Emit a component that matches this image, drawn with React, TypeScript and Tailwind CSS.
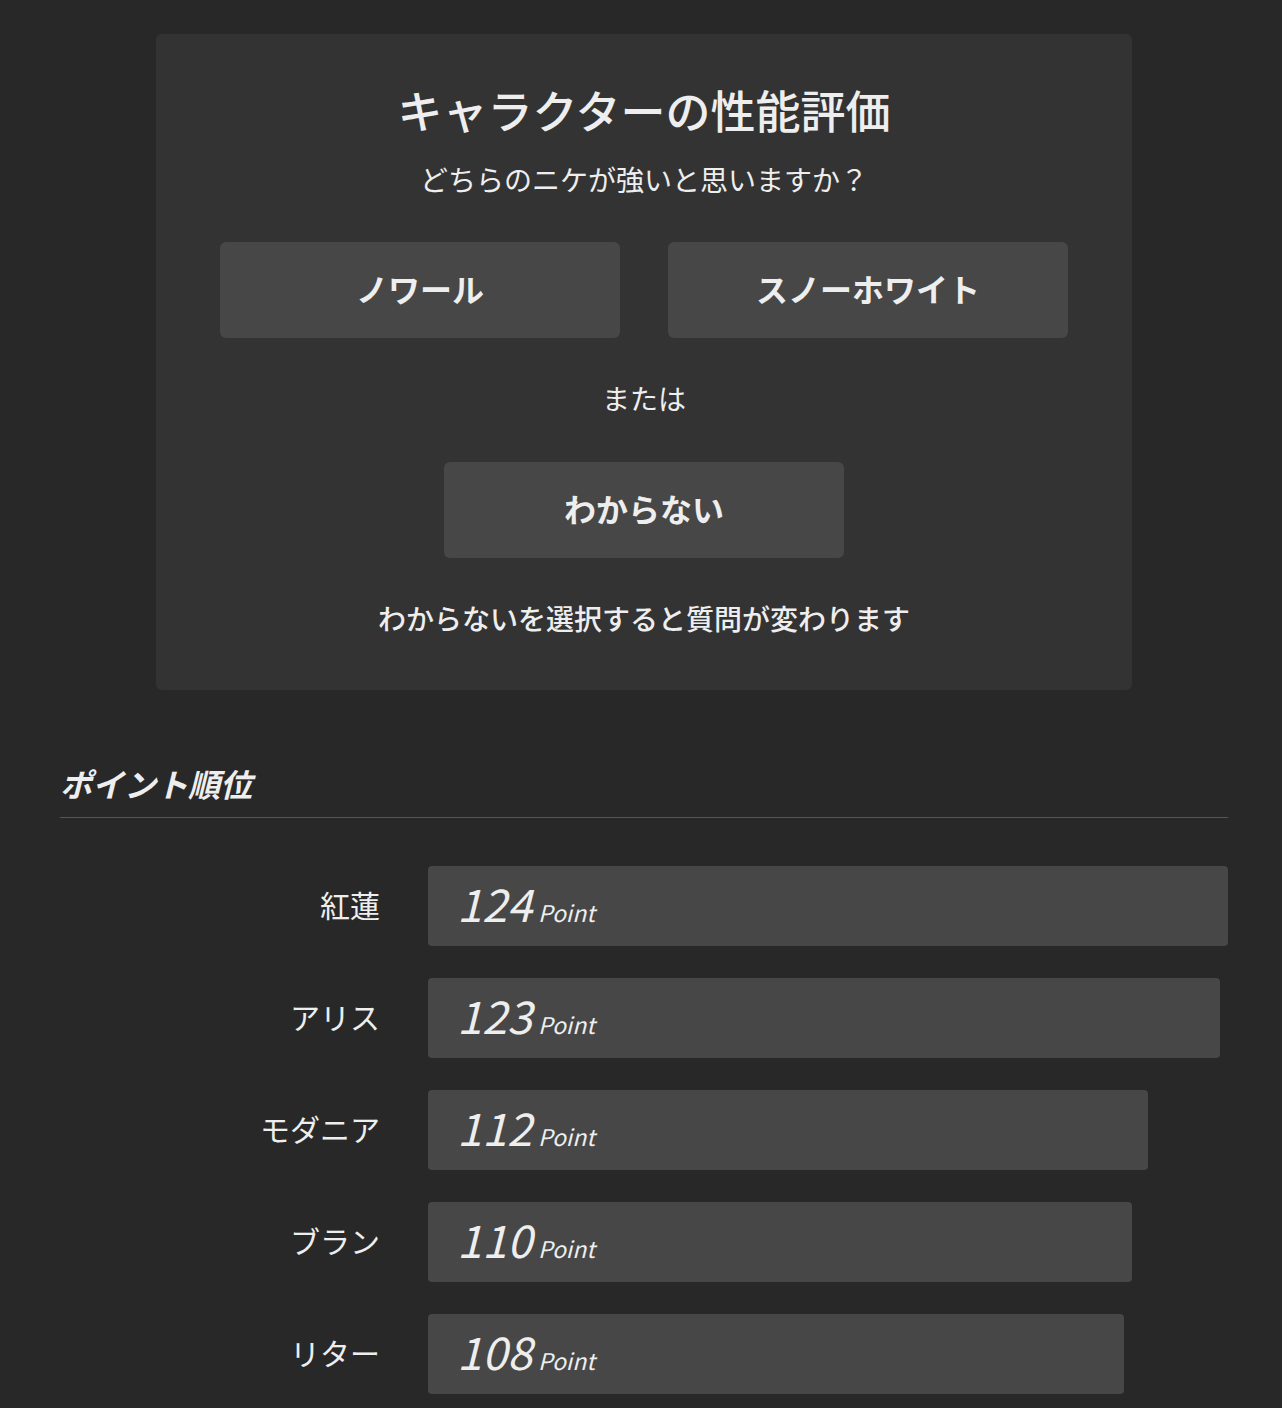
const ranking = [
  { name: "紅蓮", point: 124 },
  { name: "アリス", point: 123 },
  { name: "モダニア", point: 112 },
  { name: "ブラン", point: 110 },
  { name: "リター", point: 108 },
]

function ChoiceButton({ label }: { label: string }) {
  return (
    <button className="w-[400px] h-[96px] rounded-md bg-[#474747] text-[32px] font-bold text-[#eeeeee] flex items-center justify-center pb-[4px]">
      {label}
    </button>
  )
}

function Ranking() {
  const max = Math.max(...ranking.map((r) => r.point))
  return (
    <div className="mt-[69px]">
      <h2 className="text-[32px] leading-[48px] font-bold italic text-[#eeeeee] pb-[10px] border-b border-[#555555]">
        ポイント順位
      </h2>
      <div className="mt-[48px] flex flex-col gap-[32px]">
        {ranking.map((r) => (
          <div key={r.name} className="flex items-center gap-[48px]">
            <div className="w-[320px] text-right text-[30px] text-[#eeeeee] pb-[4px]">{r.name}</div>
            <div className="w-[800px]">
              <div
                className="h-[80px] rounded bg-[#474747] flex items-baseline pl-[29px] pt-[11px] italic text-[#eeeeee]"
                style={{ width: `${Math.floor((r.point / max) * 100)}%` }}
              >
                <span className="text-[45px] leading-[52px]">{r.point}</span>
                <span className="text-[23px] ml-[6px]">Point</span>
              </div>
            </div>
          </div>
        ))}
      </div>
    </div>
  )
}

export default function App() {
  return (
    <div
      className="min-h-[1408px] bg-[#282828] pt-[34px] pb-[40px]"
      style={{ fontFamily: '"Noto Sans CJK JP", "Noto Sans", sans-serif' }}
    >
      <div className="ml-[60px] w-[1168px]">
        <div className="mx-[96px] rounded-md bg-[#333333] pt-[46px] pb-[52px] flex flex-col items-center text-[#eeeeee]">
          <h1 className="text-[45px] leading-[60px] font-medium">キャラクターの性能評価</h1>
          <p className="mt-[19px] text-[28px] leading-[40px]">どちらのニケが強いと思いますか？</p>
          <div className="mt-[43px] flex gap-[48px]">
            <ChoiceButton label="ノワール" />
            <ChoiceButton label="スノーホワイト" />
          </div>
          <p className="mt-[40px] text-[28px] leading-[40px]">または</p>
          <div className="mt-[44px]">
            <ChoiceButton label="わからない" />
          </div>
          <p className="mt-[40px] text-[28px] leading-[40px] font-medium">わからないを選択すると質問が変わります</p>
        </div>
        <Ranking />
      </div>
    </div>
  )
}
